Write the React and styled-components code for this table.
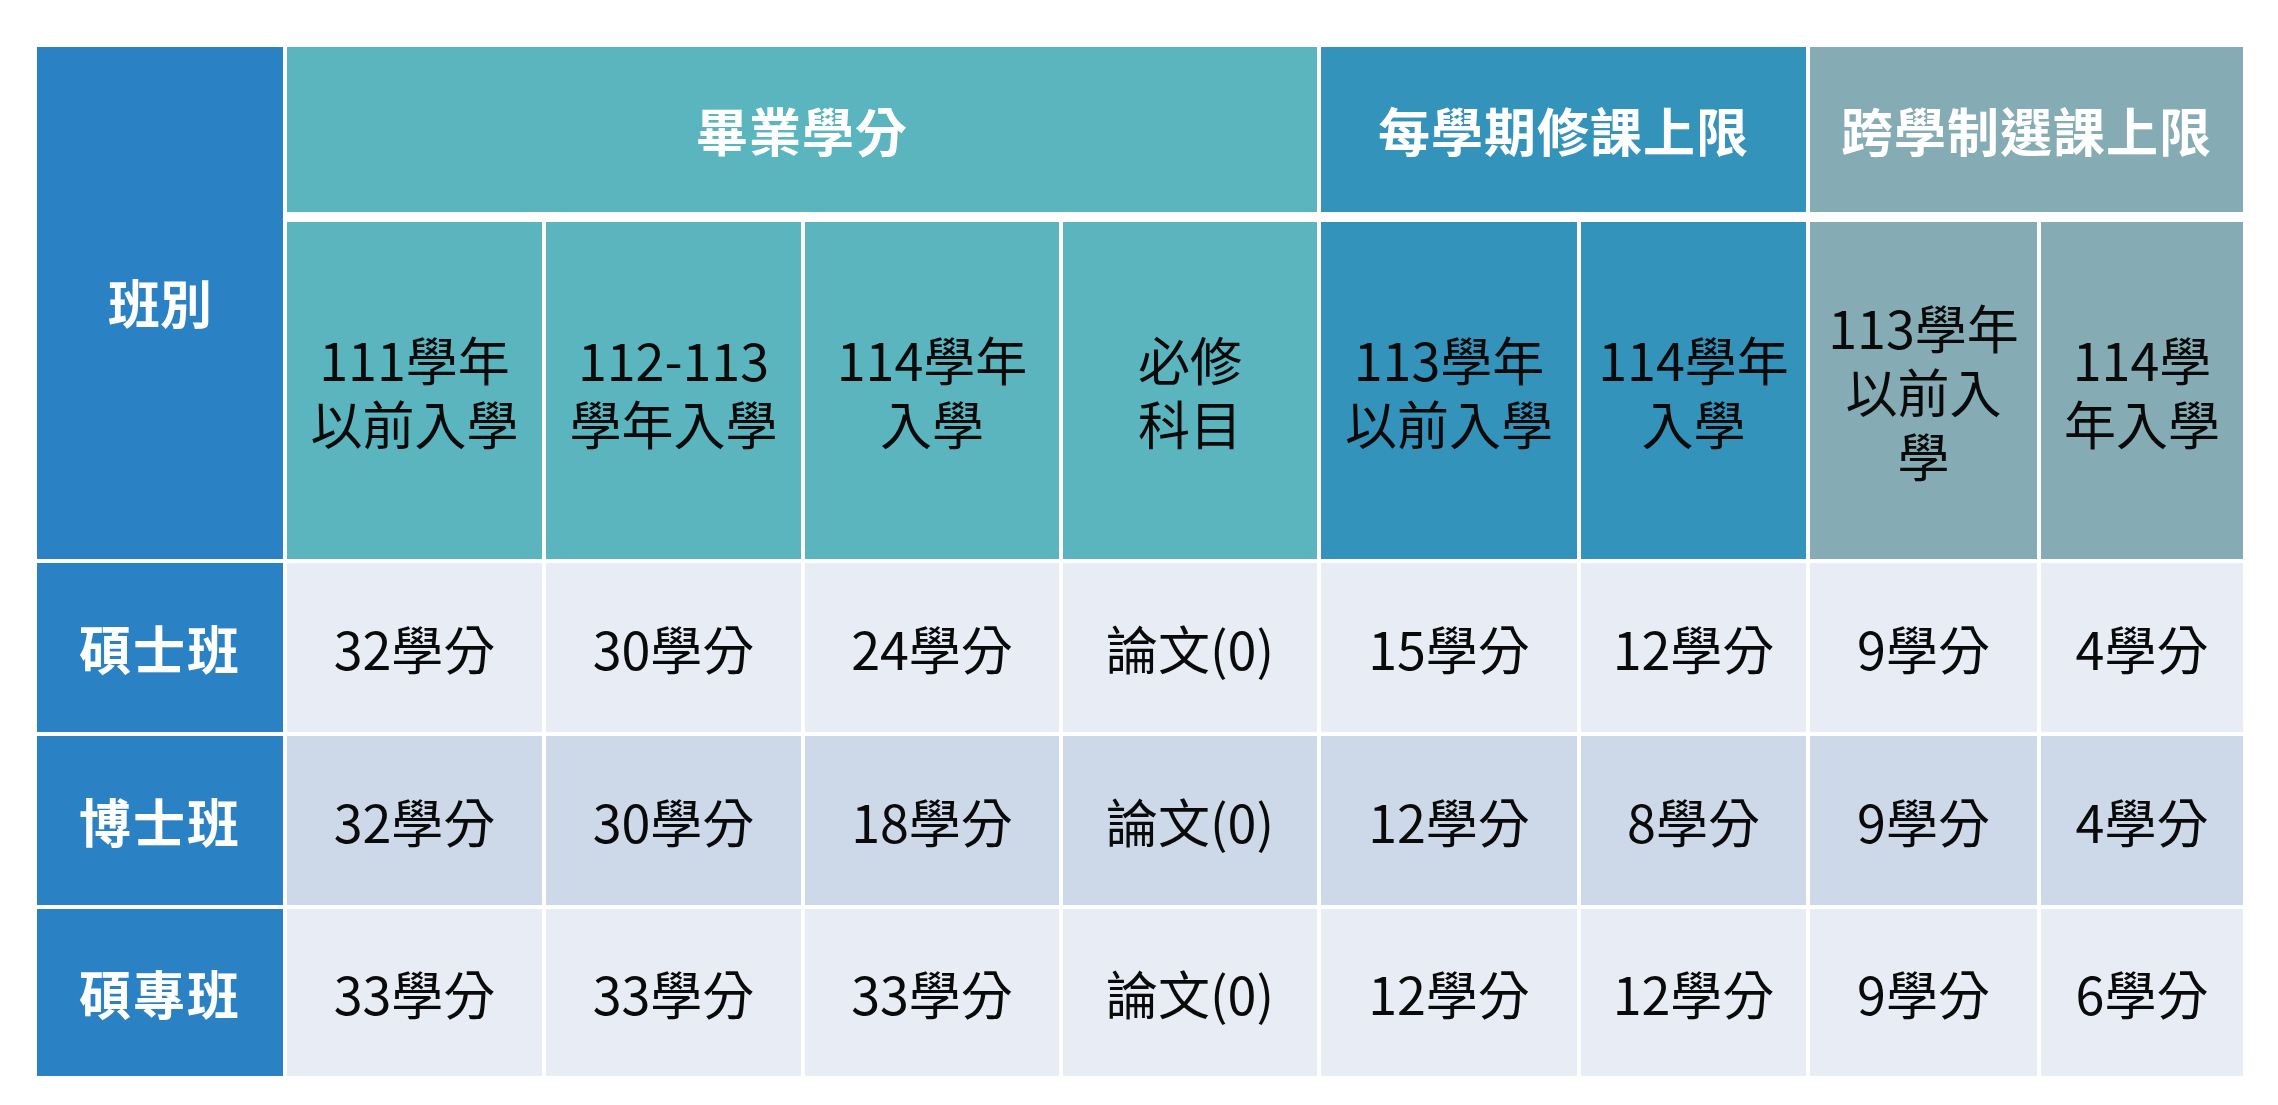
import styled, { createGlobalStyle } from "styled-components";

const tones = {
  navy: "#2a81c4",
  teal: "#5ab5be",
  ocean: "#3393bb",
  slate: "#85abb4",
};

const GlobalStyle = createGlobalStyle`
  html, body {
    margin: 0;
    padding: 0;
    background: #ffffff;
  }
  body {
    font-family: "Noto Sans CJK TC", "Noto Sans", sans-serif;
  }
`;

const Page = styled.div`
  padding: 47px 0 0 37px;
`;

const Grid = styled.div`
  display: grid;
  grid-template-columns: 246px 255px 255px 254px 254px 256px 225px 227px 202px;
  grid-template-rows: 171px 337px 169px 169px 167px;
  column-gap: 4px;
  row-gap: 4px;
`;

const Cell = styled.div`
  display: flex;
  align-items: center;
  justify-content: center;
  text-align: center;
  font-size: 52px;
  line-height: 64px;
`;

const CornerCell = styled(Cell)`
  grid-row: 1 / span 2;
  background: ${tones.navy};
  color: #ffffff;
  font-weight: 700;
  padding-bottom: 2px;
`;

const GroupHeader = styled(Cell)`
  grid-column: span ${(p) => p.$span};
  margin-bottom: 6px;
  background: ${(p) => tones[p.$tone]};
  color: #ffffff;
  font-weight: 700;
  letter-spacing: 1px;
`;

const SubHeader = styled(Cell)`
  flex-direction: column;
  background: ${(p) => tones[p.$tone]};
  color: #0a0a0a;
  font-weight: 400;
`;

const Line = styled.div`
  display: block;
  height: 64px;
  white-space: nowrap;
`;

const RowLabel = styled(Cell)`
  background: ${tones.navy};
  color: #ffffff;
  font-weight: 700;
  letter-spacing: 2px;
`;

const DataCell = styled(Cell)`
  background: ${(p) => (p.$alt ? "#cdd8e9" : "#e8ecf5")};
  color: #0a0a0a;
  font-weight: 400;
`;

const groups = [
  { label: "畢業學分", span: 4, tone: "teal" },
  { label: "每學期修課上限", span: 2, tone: "ocean" },
  { label: "跨學制選課上限", span: 2, tone: "slate" },
];

const subHeaders = [
  { lines: ["111學年", "以前入學"], tone: "teal" },
  { lines: ["112-113", "學年入學"], tone: "teal" },
  { lines: ["114學年", "入學"], tone: "teal" },
  { lines: ["必修", "科目"], tone: "teal" },
  { lines: ["113學年", "以前入學"], tone: "ocean" },
  { lines: ["114學年", "入學"], tone: "ocean" },
  { lines: ["113學年", "以前入", "學"], tone: "slate" },
  { lines: ["114學", "年入學"], tone: "slate" },
];

const rows = [
  {
    name: "碩士班",
    values: ["32學分", "30學分", "24學分", "論文(0)", "15學分", "12學分", "9學分", "4學分"],
  },
  {
    name: "博士班",
    values: ["32學分", "30學分", "18學分", "論文(0)", "12學分", "8學分", "9學分", "4學分"],
  },
  {
    name: "碩專班",
    values: ["33學分", "33學分", "33學分", "論文(0)", "12學分", "12學分", "9學分", "6學分"],
  },
];

export default function App() {
  return (
    <Page>
      <GlobalStyle />
      <Grid>
        <CornerCell>班別</CornerCell>
        {groups.map((g) => (
          <GroupHeader key={g.label} $span={g.span} $tone={g.tone}>
            {g.label}
          </GroupHeader>
        ))}
        {subHeaders.map((s, i) => (
          <SubHeader key={i} $tone={s.tone}>
            {s.lines.map((line, j) => (
              <Line key={j}>{line}</Line>
            ))}
          </SubHeader>
        ))}
        {rows.map((row, r) => [
          <RowLabel key={row.name}>{row.name}</RowLabel>,
          ...row.values.map((v, c) => (
            <DataCell key={`${row.name}-${c}`} $alt={r === 1}>
              {v}
            </DataCell>
          )),
        ])}
      </Grid>
    </Page>
  );
}
